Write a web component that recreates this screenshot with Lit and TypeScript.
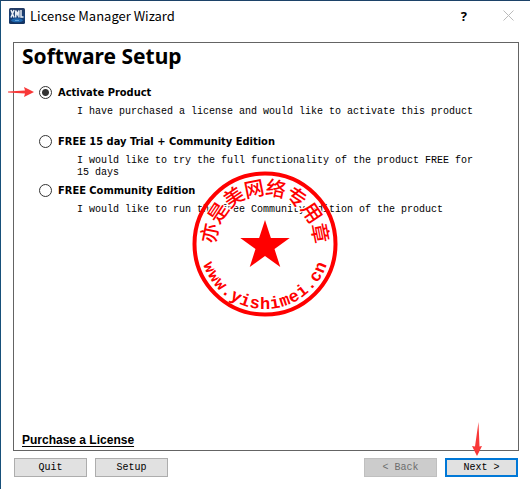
import { LitElement, html, css, svg } from "lit";
import { customElement, property, state } from "lit/decorators.js";

interface SetupOption {
  id: string;
  label: string;
  text: string;
}

const OPTIONS: SetupOption[] = [
  {
    id: "activate",
    label: "Activate Product",
    text: "I have purchased a license and would like to activate this product",
  },
  {
    id: "trial",
    label: "FREE 15 day Trial + Community Edition",
    text: "I would like to try the full functionality of the product FREE for 15 days",
  },
  {
    id: "community",
    label: "FREE Community Edition",
    text: "I would like to run the free Community Edition of the product",
  },
];

/** Round red company seal: name along the top, address along the bottom. */
@customElement("round-seal")
export class RoundSeal extends LitElement {
  @property() name = "";
  @property() address = "";

  static styles = css`
    :host {
      display: block;
      width: 146px;
      height: 146px;
    }
    svg {
      display: block;
      width: 100%;
      height: 100%;
    }
    .ring {
      fill: none;
      stroke: #f00;
      stroke-width: 4;
    }
    .star {
      fill: #f00;
    }
    .name,
    .address {
      fill: #f00;
      text-anchor: middle;
      stroke: #fff;
      stroke-width: 2;
      paint-order: stroke;
    }
    .name {
      font: 500 20px "Noto Sans CJK SC", sans-serif;
    }
    .address {
      font: bold 17px "Liberation Mono", monospace;
    }
  `;

  private star() {
    return Array.from({ length: 10 }, (_, i) => {
      const r = i % 2 ? 10 : 26;
      const a = (i * Math.PI) / 5;
      return `${(73 + r * Math.sin(a)).toFixed(2)},${(75 - r * Math.cos(a)).toFixed(2)}`;
    }).join(" ");
  }

  render() {
    const top = [...this.name];
    const bottom = [...this.address];
    return html`<svg viewBox="0 0 146 146" role="img" aria-label="${this.name} ${this.address}">
      <polygon class="star" points=${this.star()}></polygon>
      ${top.map((c, i) => {
        const a = (i - (top.length - 1) / 2) * 22.5;
        return svg`<text class="name" x="73" y="24" transform="rotate(${a} 73 73)">${c}</text>`;
      })}
      ${bottom.map((c, i) => {
        const a = ((bottom.length - 1) / 2 - i) * 9.6;
        return svg`<text class="address" x="73" y="138" transform="rotate(${a} 73 73)">${c}</text>`;
      })}
      <circle class="ring" cx="73" cy="73" r="70.5"></circle>
    </svg>`;
  }
}

@customElement("app-root")
export class AppRoot extends LitElement {
  @state() private selected = "activate";

  static styles = css`
    :host {
      display: block;
      color: #000;
      font-family: "Liberation Mono", monospace;
      font-size: 10px;
    }
    .window {
      box-sizing: border-box;
      min-height: 100vh;
      display: flex;
      flex-direction: column;
      background: #fff;
      border-top: 1px solid #1c4268;
      border-left: 1px solid #17507a;
    }
    .titlebar {
      display: flex;
      align-items: center;
      height: 29px;
      padding: 0 16px 0 8px;
      margin-bottom: 12px;
    }
    .logo {
      width: 16px;
      height: 16px;
      margin-right: 5px;
    }
    .caption {
      flex: 1;
      margin: 0;
      font: 13px/18px "Noto Sans CJK SC", sans-serif;
    }
    .tool {
      display: flex;
      padding: 0;
      border: 0;
      background: none;
      color: #000;
      font: bold 13px "Noto Sans", sans-serif;
    }
    .close {
      margin-left: 36px;
    }
    .panel {
      position: relative;
      flex: 1;
      display: flex;
      flex-direction: column;
      margin: 0 11px 0 12px;
      padding: 0 30px 0 8px;
      border: 1px solid #646464;
    }
    h1 {
      margin: 0 0 15px;
      font: bold 21px/26px "Noto Sans", sans-serif;
    }
    .options {
      flex: 1;
      margin: 0;
      padding: 0 0 0 17px;
      border: 0;
    }
    .option {
      position: relative;
      min-height: 49px;
    }
    .option label {
      display: flex;
      align-items: center;
      gap: 6px;
      height: 17px;
      margin-bottom: 5px;
      font: bold 11px/17px "DejaVu Sans Condensed", "DejaVu Sans", sans-serif;
    }
    .option input {
      appearance: none;
      box-sizing: border-box;
      width: 13px;
      height: 13px;
      margin: 0;
      border: 1px solid #333;
      border-radius: 50%;
      background: #fff;
    }
    .option input:checked {
      background: radial-gradient(circle, #333 3px, #fff 4px);
    }
    .option p {
      margin: 0 0 0 38px;
      line-height: 12px;
    }
    .pointer {
      position: absolute;
      overflow: visible;
      fill: #f83838;
    }
    .to-option {
      left: -31px;
      top: 2px;
    }
    .to-next {
      right: 35px;
      bottom: 21px;
    }
    round-seal {
      position: absolute;
      left: 178px;
      top: 128px;
      pointer-events: none;
    }
    .purchase {
      align-self: flex-start;
      margin-bottom: 2px;
      color: #000;
      font: bold 12px/16px "Liberation Sans", sans-serif;
      text-underline-offset: 2px;
    }
    .actions {
      display: flex;
      gap: 8px;
      padding: 7px 12px 12px 13px;
    }
    .spacer {
      flex: 1;
    }
    .action {
      box-sizing: border-box;
      width: 73px;
      height: 19px;
      padding: 0;
      border: 1px solid #adadad;
      background: #e1e1e1;
      color: #000;
      font: inherit;
    }
    .action:disabled {
      border-color: #bfbfbf;
      background: #ccc;
      color: #6d6d6d;
    }
    .default {
      border: 2px solid #0078d7;
    }
    .anchor {
      position: relative;
      display: flex;
    }
  `;

  render() {
    return html`<main class="window">
      <header class="titlebar">
        <svg class="logo" viewBox="0 0 16 16" aria-hidden="true">
          <defs>
            <linearGradient id="g" x2="0" y2="1">
              <stop offset="0" stop-color="#243b63"></stop>
              <stop offset="0.6" stop-color="#17427c"></stop>
              <stop offset="1" stop-color="#12305c"></stop>
            </linearGradient>
          </defs>
          <rect width="16" height="16" rx="1.5" fill="url(#g)"></rect>
          <ellipse cx="8" cy="12.3" rx="6" ry="2" fill="#1f68b0"></ellipse>
          <path d="M6 12.5h4" stroke="#5fa0d8"></path>
          <path
            d="M2 2l3 7.500M5 2L2 9.500M6.700 9.500V2.500l1.600 4 1.600-4v7M12 2v7h2.500"
            fill="none"
            stroke="#e8edf4"
            stroke-width="1.5"
          ></path>
        </svg>
        <p class="caption">License Manager Wizard</p>
        <button class="tool" aria-label="Help">?</button>
        <button class="tool close" aria-label="Close">
          <svg width="11" height="11" viewBox="0 0 11 11">
            <path d="M.5.5l10 10M10.5.5l-10 10" stroke="#bbb" fill="none"></path>
          </svg>
        </button>
      </header>
      <section class="panel">
        <h1>Software Setup</h1>
        <fieldset class="options" aria-label="Software Setup">
          ${OPTIONS.map(
            (o) => html`<div class="option">
              <label
                ><input
                  type="radio"
                  name="setup"
                  .checked=${this.selected === o.id}
                  @change=${() => (this.selected = o.id)}
                />${o.label}</label
              >
              <p>${o.text}</p>
              ${o.id === "activate"
                ? html`<svg class="pointer to-option" width="26" height="12" viewBox="0 0 26 12" aria-hidden="true">
                    <path d="M0 5.5L17 4.6L16 1L26 6L16 11L17 7.4L0 6.500z"></path>
                  </svg>`
                : ""}
            </div>`
          )}
        </fieldset>
        <a class="purchase" href="#purchase">Purchase a License</a>
        <round-seal name="亦是美网络专用章" address="www.yishimei.cn"></round-seal>
      </section>
      <footer class="actions">
        <button class="action">Quit</button>
        <button class="action">Setup</button>
        <span class="spacer"></span>
        <button class="action" disabled>&lt; Back</button>
        <span class="anchor">
          <button class="action default">Next &gt;</button>
          <svg class="pointer to-next" width="12" height="34" viewBox="0 0 12 34" aria-hidden="true">
            <path d="M7.5 0L8.5 24.500L11 24L6 34L1 24L4 24.500z"></path>
          </svg>
        </span>
      </footer>
    </main>`;
  }
}
